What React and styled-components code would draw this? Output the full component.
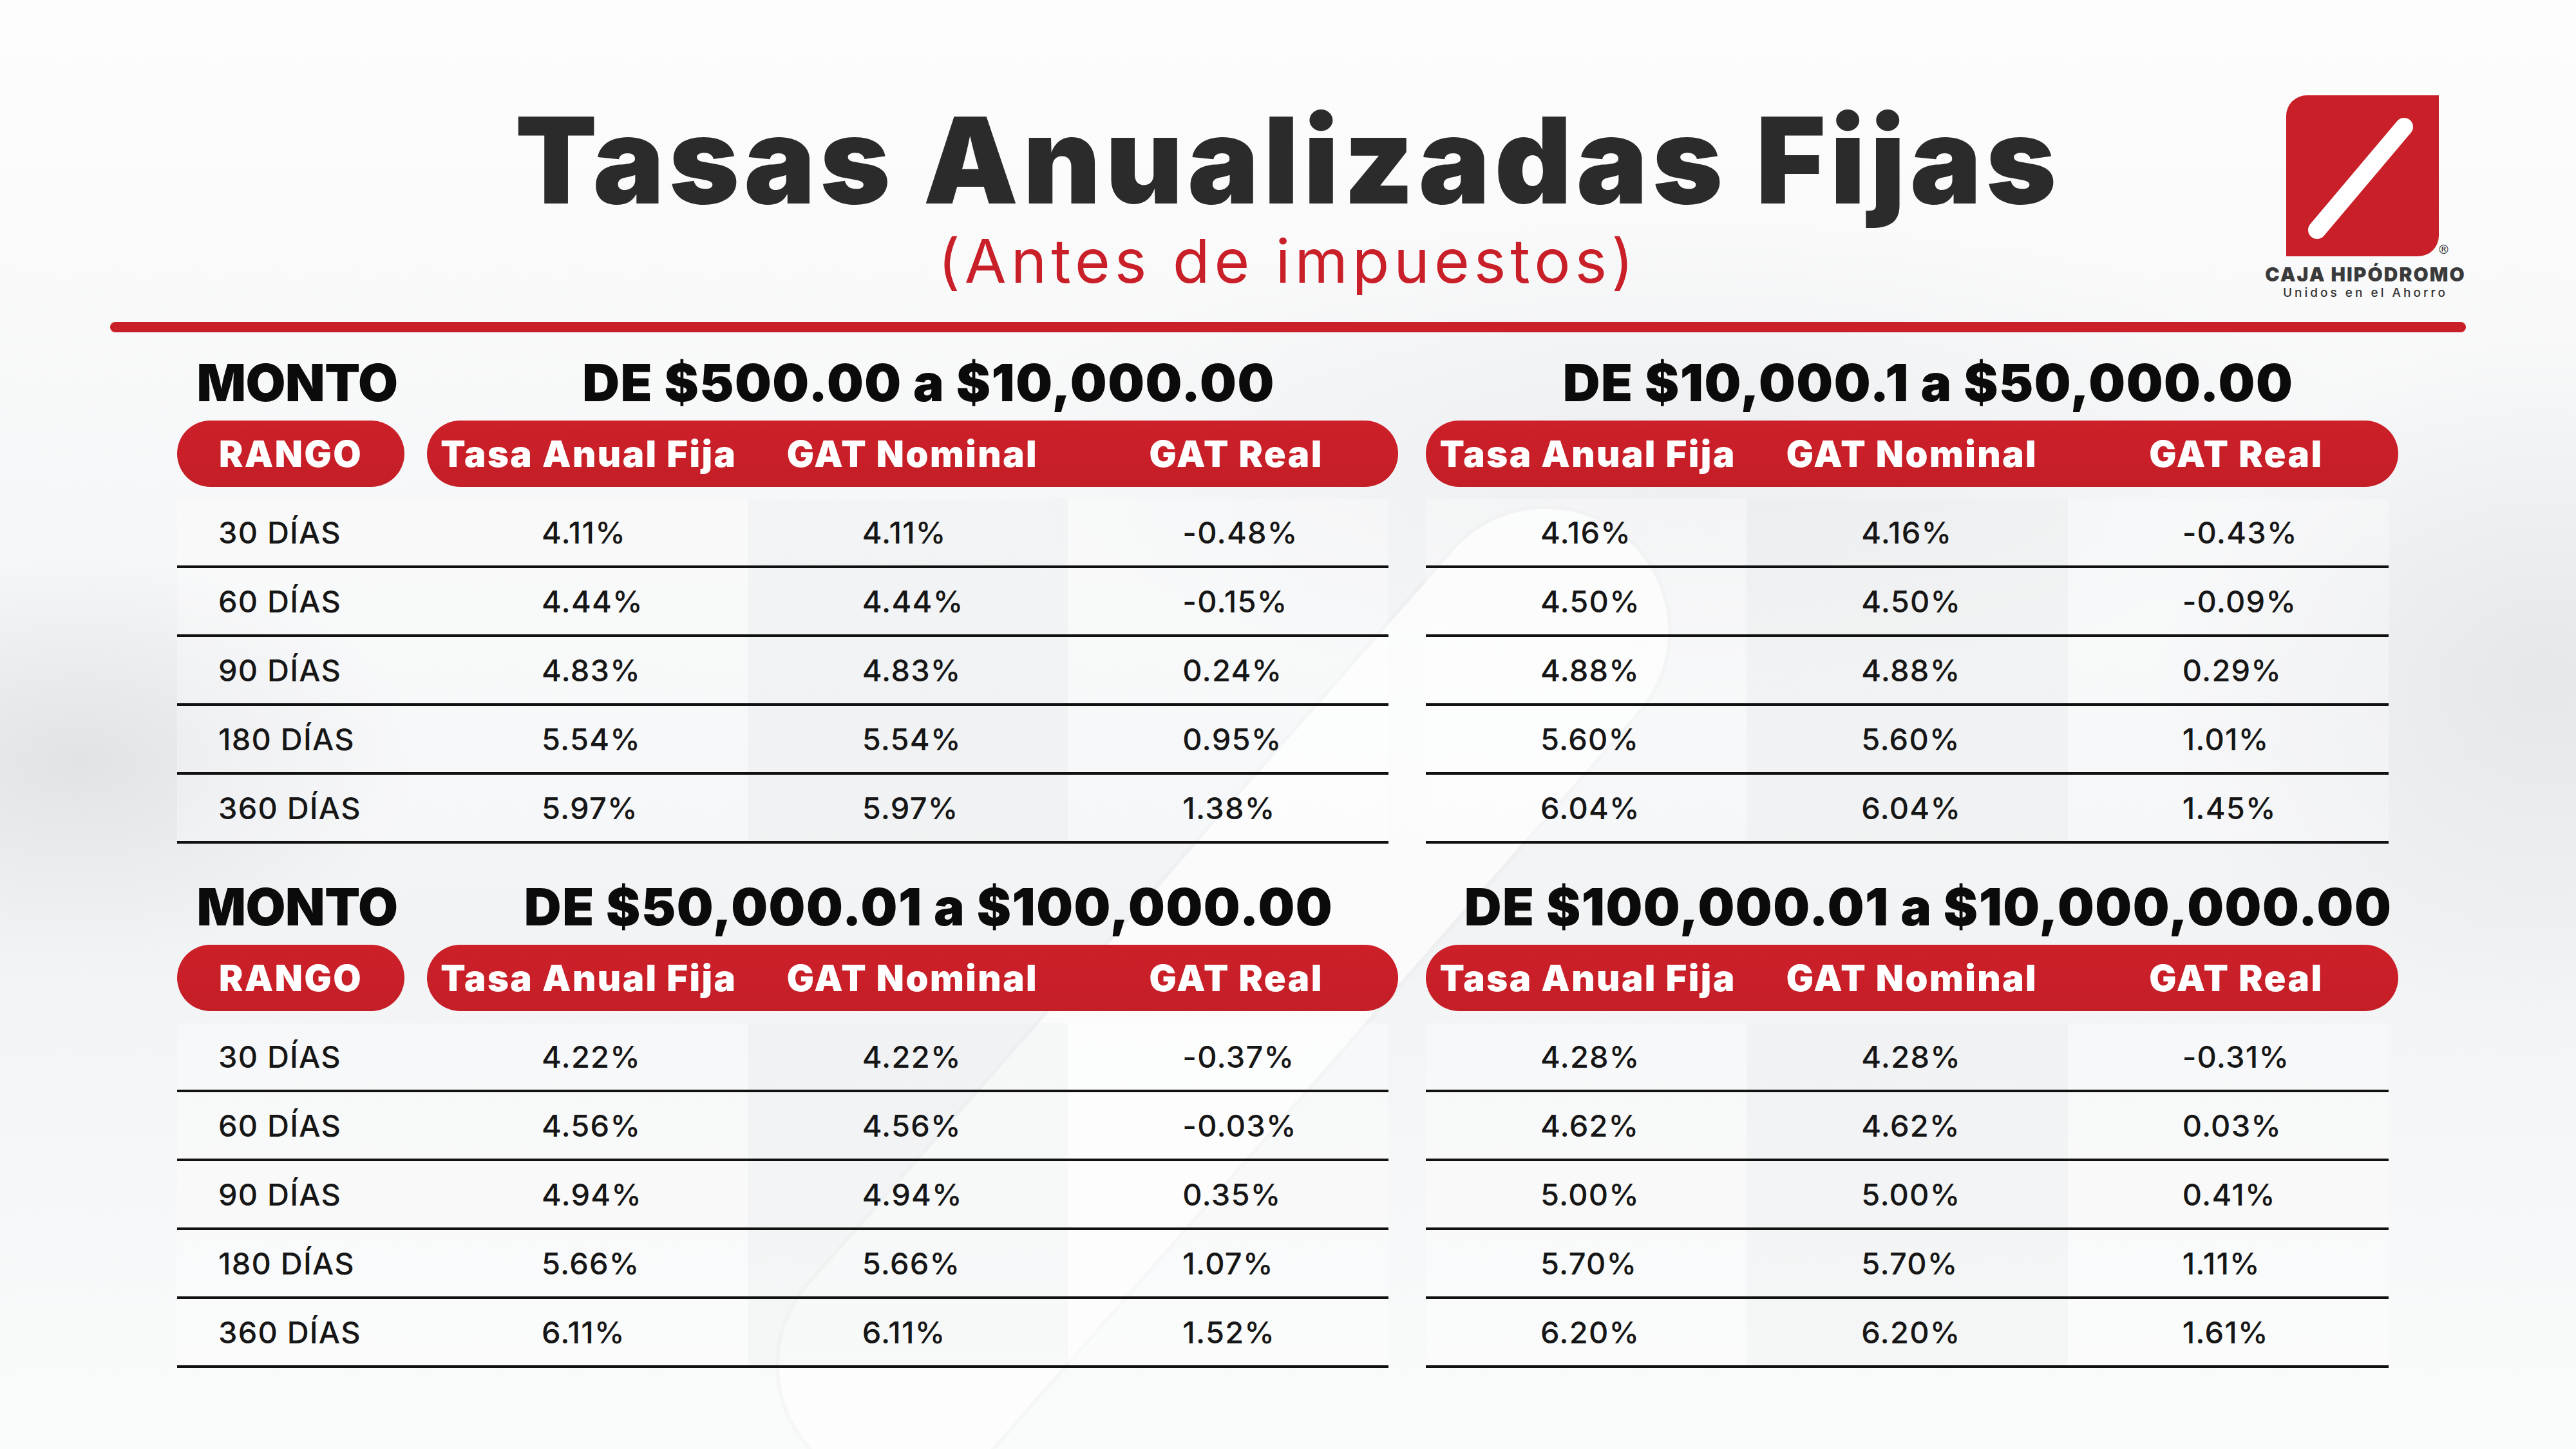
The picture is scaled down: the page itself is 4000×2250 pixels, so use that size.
import React from 'react';
import styled, { createGlobalStyle } from 'styled-components';

const GlobalStyle = createGlobalStyle`
  html, body {
    margin: 0;
    padding: 0;
  }
  body {
    font-family: Inter, "Noto Sans", sans-serif;
    background: #f7f8f9;
  }
`;

const RED = '#c91f28';

const Page = styled.div`
  position: relative;
  width: 4000px;
  height: 2250px;
  overflow: hidden;
  background:
    radial-gradient(ellipse 700px 420px at 120px 1180px, rgba(196, 200, 206, 0.4), transparent 75%),
    radial-gradient(ellipse 800px 700px at 3950px 1050px, rgba(200, 204, 209, 0.35), transparent 75%),
    radial-gradient(ellipse 1400px 500px at 2600px 700px, rgba(214, 217, 221, 0.3), transparent 75%),
    linear-gradient(180deg, #fdfdfd 0%, #f6f7f8 35%, #f2f3f5 65%, #fafbfb 100%);
`;

const Watermark = styled.svg`
  position: absolute;
  inset: 0;
  width: 4000px;
  height: 2250px;
  pointer-events: none;
`;

const Content = styled.div`
  position: relative;
`;

const Header = styled.header`
  display: grid;
  grid-template-columns: 1fr auto 1fr;
  align-items: start;
  height: 500px;
  box-sizing: border-box;
  padding: 148px 171px 0;
`;

const TitleBlock = styled.div`
  grid-column: 2;
  display: flex;
  flex-direction: column;
  align-items: center;
  padding-top: 8px;
`;

const Title = styled.h1`
  margin: 0;
  font-family: Inter, sans-serif;
  font-weight: 900;
  font-size: 186px;
  line-height: 186px;
  letter-spacing: 7px;
  color: #2b2b2b;
  white-space: nowrap;
`;

const Subtitle = styled.p`
  margin: 16px 0 0;
  font-family: Inter, sans-serif;
  font-weight: 400;
  font-size: 94px;
  line-height: 94px;
  letter-spacing: 7px;
  color: ${RED};
  white-space: nowrap;
`;

const Logo = styled.div`
  grid-column: 3;
  justify-self: end;
  position: relative;
  display: flex;
  flex-direction: column;
  align-items: center;
  width: 312px;
`;

const LogoMark = styled.div`
  width: 237px;
  height: 250px;
  margin-left: -10px;
  background: ${RED};
  border-radius: 32px 0 32px 0;
`;

const Registered = styled.span`
  position: absolute;
  top: 230px;
  left: 268px;
  font-family: "DejaVu Sans", sans-serif;
  font-size: 19px;
  line-height: 19px;
  color: #333;
`;

const BrandName = styled.div`
  margin-top: 13px;
  font-family: Inter, sans-serif;
  font-weight: 900;
  font-size: 30px;
  line-height: 30px;
  letter-spacing: 2px;
  color: #3a3a3a;
  white-space: nowrap;
`;

const Tagline = styled.div`
  margin-top: 4px;
  font-family: Inter, sans-serif;
  font-weight: 500;
  font-size: 19px;
  line-height: 19px;
  letter-spacing: 4px;
  color: #333;
  white-space: nowrap;
`;

const Divider = styled.div`
  height: 16px;
  margin: 0 171px;
  border-radius: 8px;
  background: ${RED};
`;

const Tables = styled.main`
  display: flex;
  flex-direction: column;
  gap: 54px;
  padding: 34px 0 0 275px;
`;

const Section = styled.section`
  display: flex;
  align-items: start;
  gap: 43px;
`;

const Table = styled.div`
  display: grid;
  grid-template-columns: ${(p) => (p.$withRange ? '353px 1508px' : '1510px')};
  column-gap: 35px;
`;

const Heading = styled.div`
  font-family: Inter, sans-serif;
  font-weight: 900;
  font-size: 80px;
  line-height: 88px;
  letter-spacing: ${(p) => (p.$tight ? -0.5 : 1.5)}px;
  color: #0b0b0b;
  text-align: center;
  white-space: nowrap;
  padding-left: ${(p) => p.$offset || 0}px;
  grid-column: ${(p) => (p.$last ? '-2 / -1' : 'auto')};
`;

const Pill = styled.div`
  margin-top: 15px;
  height: 103px;
  border-radius: 52px;
  background: linear-gradient(180deg, #cd2029 0%, #c41e27 100%);
  display: grid;
  grid-template-columns: ${(p) => p.$cols};
  align-items: center;
`;

const HeadCell = styled.div`
  font-family: Inter, sans-serif;
  font-weight: 900;
  font-size: 56px;
  line-height: 60px;
  letter-spacing: 2.5px;
  color: #ffffff;
  text-align: center;
  white-space: nowrap;
`;

const Body = styled.div`
  grid-column: 1 / -1;
  padding-top: 19px;
`;

const Row = styled.div`
  display: grid;
  grid-template-columns: ${(p) => (p.$withRange ? '388px repeat(3, 1fr)' : 'repeat(3, 1fr)')};
  height: 107px;
  box-sizing: border-box;
  margin-right: 15px;
  border-bottom: 4px solid #111;
`;

const Cell = styled.div`
  display: flex;
  align-items: center;
  padding-left: ${(p) => (p.$range ? 64 : 178)}px;
  background: ${(p) => (p.$shade ? 'rgba(228, 231, 235, 0.18)' : 'rgba(255, 255, 255, 0.3)')};
  font-family: Inter, sans-serif;
  font-weight: 500;
  font-size: 47px;
  letter-spacing: 1.2px;
  color: #161616;
  white-space: nowrap;
`;

const DAYS = ['30 DÍAS', '60 DÍAS', '90 DÍAS', '180 DÍAS', '360 DÍAS'];
const COLUMNS = ['Tasa Anual Fija', 'GAT Nominal', 'GAT Real'];

const sections = [
  [
    {
      title: 'DE $500.00 a $10,000.00',
      rows: [
        ['4.11%', '4.11%', '-0.48%'],
        ['4.44%', '4.44%', '-0.15%'],
        ['4.83%', '4.83%', '0.24%'],
        ['5.54%', '5.54%', '0.95%'],
        ['5.97%', '5.97%', '1.38%'],
      ],
    },
    {
      title: 'DE $10,000.1 a $50,000.00',
      rows: [
        ['4.16%', '4.16%', '-0.43%'],
        ['4.50%', '4.50%', '-0.09%'],
        ['4.88%', '4.88%', '0.29%'],
        ['5.60%', '5.60%', '1.01%'],
        ['6.04%', '6.04%', '1.45%'],
      ],
    },
  ],
  [
    {
      title: 'DE $50,000.01 a $100,000.00',
      rows: [
        ['4.22%', '4.22%', '-0.37%'],
        ['4.56%', '4.56%', '-0.03%'],
        ['4.94%', '4.94%', '0.35%'],
        ['5.66%', '5.66%', '1.07%'],
        ['6.11%', '6.11%', '1.52%'],
      ],
    },
    {
      title: 'DE $100,000.01 a $10,000,000.00',
      rows: [
        ['4.28%', '4.28%', '-0.31%'],
        ['4.62%', '4.62%', '0.03%'],
        ['5.00%', '5.00%', '0.41%'],
        ['5.70%', '5.70%', '1.11%'],
        ['6.20%', '6.20%', '1.61%'],
      ],
    },
  ],
];

const RateTable = ({ title, rows, withRange }) => (
  <Table $withRange={withRange}>
    {withRange && (
      <Heading $offset={20} $tight>
        MONTO
      </Heading>
    )}
    <Heading $last $offset={50}>
      {title}
    </Heading>
    {withRange && (
      <Pill $cols="1fr">
        <HeadCell>RANGO</HeadCell>
      </Pill>
    )}
    <Pill $cols="repeat(3, 1fr)">
      {COLUMNS.map((c) => (
        <HeadCell key={c}>{c}</HeadCell>
      ))}
    </Pill>
    <Body>
      {rows.map((r, i) => (
        <Row key={DAYS[i]} $withRange={withRange}>
          {withRange && <Cell $range>{DAYS[i]}</Cell>}
          {r.map((v, j) => (
            <Cell key={j} $shade={j === 1}>
              {v}
            </Cell>
          ))}
        </Row>
      ))}
    </Body>
  </Table>
);

const App = () => (
  <Page>
    <GlobalStyle />
    <Watermark viewBox="0 0 4000 2250">
      <line x1="1400" y1="2120" x2="2400" y2="980" stroke="rgba(0,0,0,0.015)" strokeWidth="392" strokeLinecap="round" />
      <line x1="1400" y1="2120" x2="2400" y2="980" stroke="rgba(255,255,255,0.75)" strokeWidth="380" strokeLinecap="round" />
    </Watermark>
    <Content>
      <Header>
        <TitleBlock>
          <Title>Tasas Anualizadas Fijas</Title>
          <Subtitle>(Antes de impuestos)</Subtitle>
        </TitleBlock>
        <Logo>
          <LogoMark>
            <svg width="237" height="250" viewBox="0 0 237 250">
              <line x1="183" y1="49" x2="48" y2="209" stroke="#fff" strokeWidth="28" strokeLinecap="round" />
            </svg>
          </LogoMark>
          <Registered>®</Registered>
          <BrandName>CAJA HIPÓDROMO</BrandName>
          <Tagline>Unidos en el Ahorro</Tagline>
        </Logo>
      </Header>
      <Divider />
      <Tables>
        {sections.map((pair, i) => (
          <Section key={i}>
            <RateTable title={pair[0].title} rows={pair[0].rows} withRange />
            <RateTable title={pair[1].title} rows={pair[1].rows} />
          </Section>
        ))}
      </Tables>
    </Content>
  </Page>
);

export default App;
